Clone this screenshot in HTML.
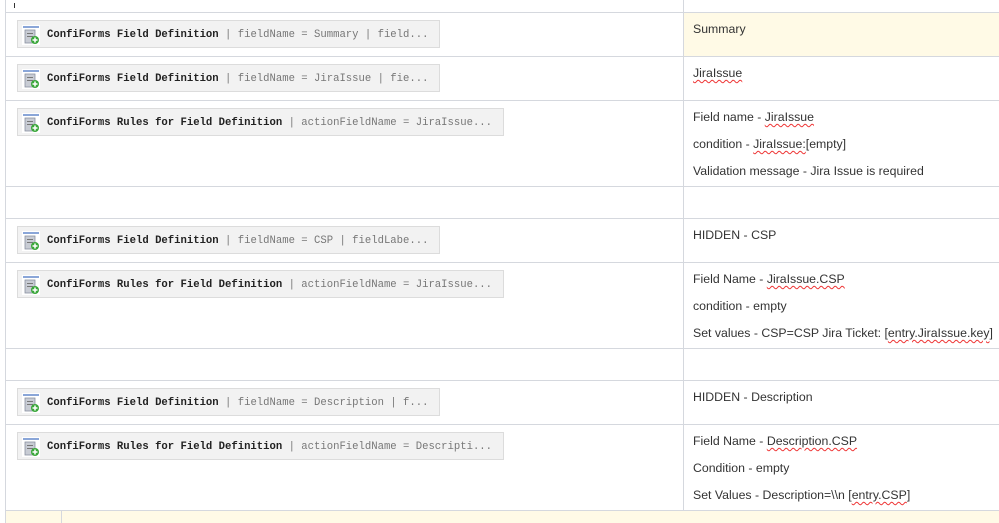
<!DOCTYPE html>
<html><head><meta charset="utf-8"><style>
body{margin:0;width:999px;height:523px;overflow:hidden;background:#fff;position:relative;font-family:"Liberation Sans",sans-serif}
.h{position:absolute;left:5px;right:0;height:1px;background:#d5d8de}
.v{position:absolute;width:1px;background:#d5d8de}
.box{position:absolute;left:17px;height:28px;background:#f2f2f2;border:1px solid #dcdcdc;box-sizing:border-box;font-family:"Liberation Mono",monospace;font-size:10.6px;line-height:29px;color:#222;white-space:nowrap;padding-left:29px}
.box b{font-weight:bold;color:#222}
.box span{color:#777}
.ic{position:absolute;left:4px;top:4px;width:18px;height:20px}
.t{position:absolute;left:693px;font-size:12.3px;color:#333;white-space:nowrap}
.sq{text-decoration:underline wavy #e33;text-decoration-thickness:1px;text-underline-offset:2px}
</style></head><body>
<div style="position:absolute;left:684px;top:13px;width:315px;height:43px;background:#fffae6"></div>
<div style="position:absolute;left:5px;top:510px;width:994px;height:13px;background:#fffae6"></div>
<div class="v" style="left:5px;top:0;height:523px"></div>
<div class="v" style="left:683px;top:0;height:510px"></div>
<div class="v" style="left:61px;top:510px;height:13px"></div>
<div style="position:absolute;left:14px;top:3px;width:1px;height:5px;background:#333"></div>
<div class="h" style="top:12px"></div>
<div class="h" style="top:56px"></div>
<div class="h" style="top:100px"></div>
<div class="h" style="top:186px"></div>
<div class="h" style="top:218px"></div>
<div class="h" style="top:262px"></div>
<div class="h" style="top:348px"></div>
<div class="h" style="top:380px"></div>
<div class="h" style="top:424px"></div>
<div class="h" style="top:510px"></div>

<svg width="0" height="0" style="position:absolute"><defs><g id="i">
<rect x="0" y="0" width="18" height="20" fill="#fff"/>
<rect x="1" y="1" width="16" height="2" fill="#8aa6d8"/>
<rect x="3" y="5" width="10" height="13" fill="#c8ccd4" stroke="#8a92a0" stroke-width="0.8"/>
<rect x="5" y="8" width="6" height="1" fill="#777"/><rect x="5" y="11" width="6" height="1" fill="#777"/>
<circle cx="13" cy="15" r="4" fill="#3aa73a"/>
<path d="M13 12.5v5M10.5 15h5" stroke="#fff" stroke-width="1.5"/>
</g></defs></svg>

<div class="box" style="top:20px;width:423px"><svg class="ic"><use href="#i"/></svg><b>ConfiForms Field Definition</b> <span>| fieldName = Summary | field...</span></div>
<div class="box" style="top:64px;width:423px"><svg class="ic"><use href="#i"/></svg><b>ConfiForms Field Definition</b> <span>| fieldName = JiraIssue | fie...</span></div>
<div class="box" style="top:108px;width:487px"><svg class="ic"><use href="#i"/></svg><b>ConfiForms Rules for Field Definition</b> <span>| actionFieldName = JiraIssue...</span></div>
<div class="box" style="top:226px;width:423px"><svg class="ic"><use href="#i"/></svg><b>ConfiForms Field Definition</b> <span>| fieldName = CSP | fieldLabe...</span></div>
<div class="box" style="top:270px;width:487px"><svg class="ic"><use href="#i"/></svg><b>ConfiForms Rules for Field Definition</b> <span>| actionFieldName = JiraIssue...</span></div>
<div class="box" style="top:388px;width:423px"><svg class="ic"><use href="#i"/></svg><b>ConfiForms Field Definition</b> <span>| fieldName = Description | f...</span></div>
<div class="box" style="top:432px;width:487px"><svg class="ic"><use href="#i"/></svg><b>ConfiForms Rules for Field Definition</b> <span>| actionFieldName = Descripti...</span></div>

<div class="t" style="top:22px">Summary</div>
<div class="t" style="top:66px"><span class="sq">JiraIssue</span></div>
<div class="t" style="top:110px">Field name - <span class="sq">JiraIssue</span></div>
<div class="t" style="top:137px">condition - <span class="sq">JiraIssue:</span>[empty]</div>
<div class="t" style="top:164px">Validation message - Jira Issue is required</div>
<div class="t" style="top:228px">HIDDEN - CSP</div>
<div class="t" style="top:272px">Field Name - <span class="sq">JiraIssue.CSP</span></div>
<div class="t" style="top:299px">condition - empty</div>
<div class="t" style="top:326px">Set values - CSP=CSP Jira Ticket: [<span class="sq">entry.JiraIssue.key</span>]</div>
<div class="t" style="top:390px">HIDDEN - Description</div>
<div class="t" style="top:434px">Field Name - <span class="sq">Description.CSP</span></div>
<div class="t" style="top:461px">Condition - empty</div>
<div class="t" style="top:488px">Set Values - Description=\\n [<span class="sq">entry.CSP</span>]</div>
</body></html>
